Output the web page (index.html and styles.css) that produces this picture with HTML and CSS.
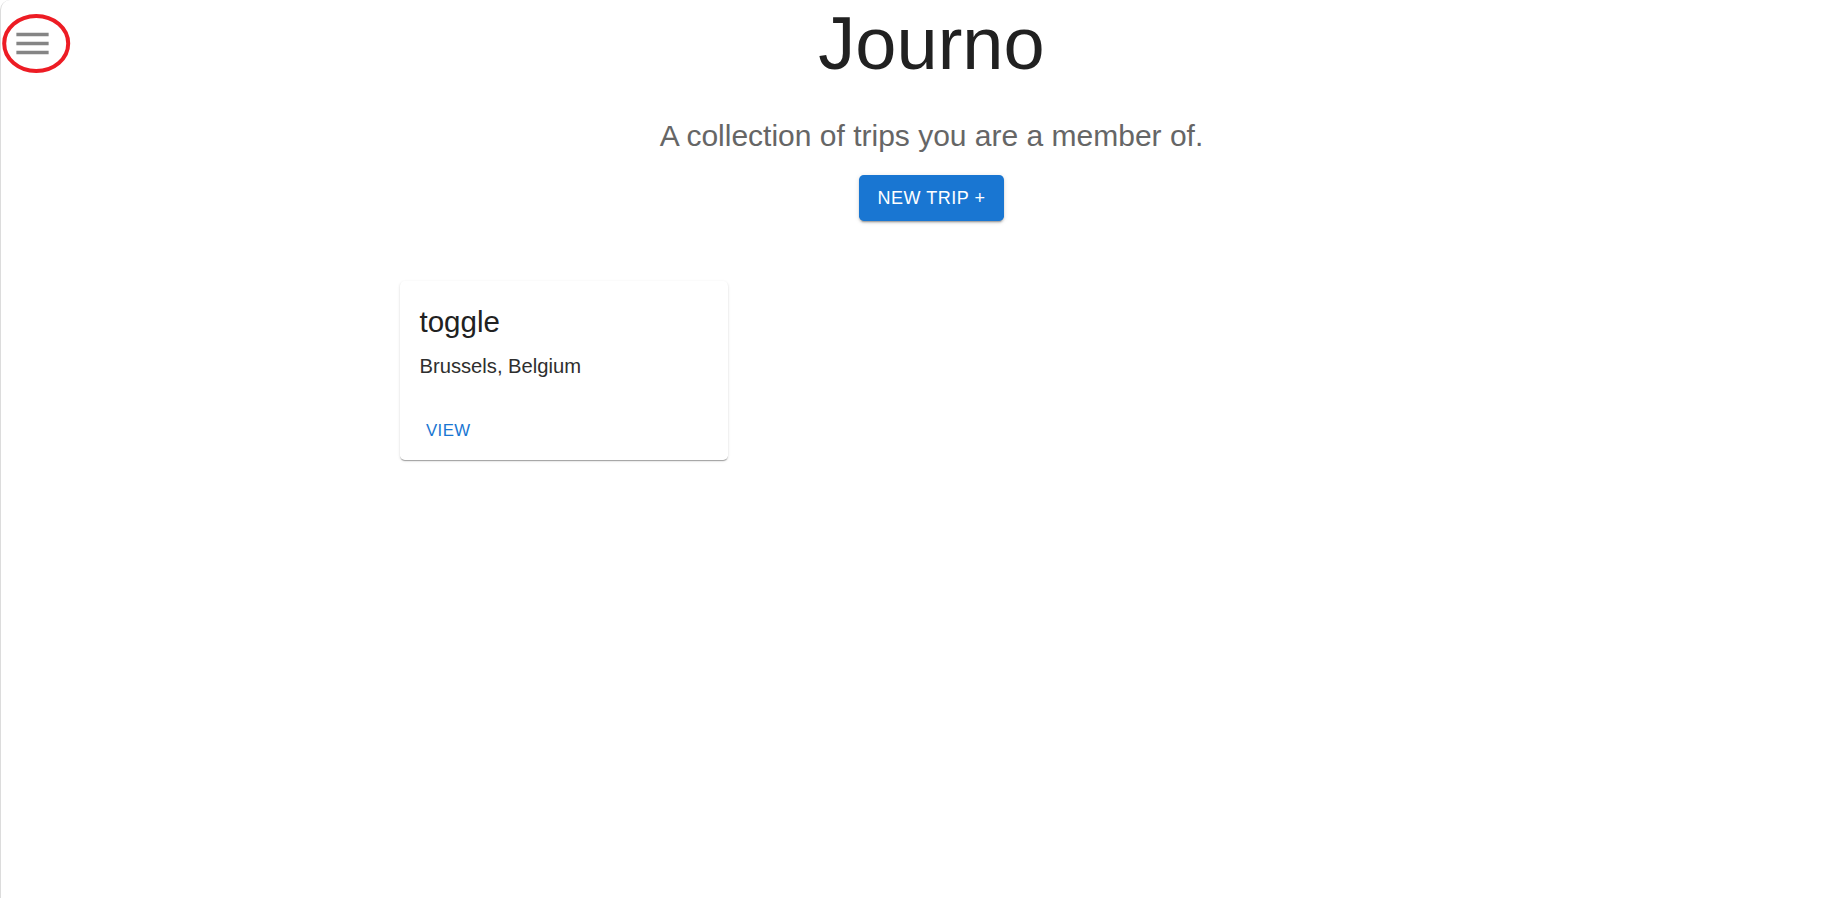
FILE: index.html
```html
<!DOCTYPE html>
<html lang="en">
<head>
<meta charset="utf-8">
<title>Journo</title>
<link rel="stylesheet" href="styles.css">
</head>
<body>
<div class="page">
  <button class="menu-button" aria-label="open menu">
    <svg class="menu-icon" viewBox="0 0 24 24" width="43" height="43"><path d="M3 18h18v-2H3v2zm0-5h18v-2H3v2zm0-7v2h18V6H3z" fill="#858585"/></svg>
    <svg class="annotation" viewBox="0 0 80 80" width="80" height="80"><ellipse cx="36.2" cy="43.5" rx="32" ry="27.5" fill="none" stroke="#ed1c24" stroke-width="4"/></svg>
  </button>
  <header class="hero">
    <h1 class="hero-title">Journo</h1>
    <p class="hero-subtitle">A collection of trips you are a member of.</p>
    <button class="btn-contained">NEW TRIP +</button>
  </header>
  <main class="container">
    <div class="trip-grid">
      <div class="card">
        <div class="card-content">
          <h2 class="card-title">toggle</h2>
          <p class="card-text">Brussels, Belgium</p>
        </div>
        <div class="card-actions">
          <button class="btn-text">VIEW</button>
        </div>
      </div>
    </div>
  </main>
</div>
</body>
</html>
```
FILE: styles.css
```css
* { box-sizing: border-box; }
html, body { margin: 0; padding: 0; background: #fff; }
body {
  font-family: "Liberation Sans", Arial, Helvetica, sans-serif;
  color: rgba(0,0,0,0.87);
}
.page {
  position: relative;
  min-height: 100vh;
  border-left: 1px solid #dcdcdc;
  border-top-left-radius: 10px;
}
.menu-button {
  position: absolute;
  left: -1px;
  top: 0;
  width: 80px;
  height: 80px;
  padding: 0;
  border: 0;
  background: transparent;
  cursor: pointer;
}
.menu-icon {
  position: absolute;
  left: 11px;
  top: 22px;
  display: block;
}
.annotation {
  position: absolute;
  left: 0;
  top: 0;
  display: block;
}
.hero {
  padding-left: 40px;
  display: flex;
  flex-direction: column;
  align-items: center;
}
.hero-title {
  margin: 0;
  font-size: 74px;
  line-height: 1.2;
  font-weight: 400;
  color: #212121;
}
.hero-subtitle {
  margin: 26.8px 0 0;
  font-size: 30px;
  line-height: 40px;
  color: #666;
}
.btn-contained {
  margin-top: 19.4px;
  height: 46px;
  padding: 7px 19px;
  font-family: inherit;
  font-size: 18px;
  line-height: 32px;
  letter-spacing: 0.5px;
  font-weight: 400;
  color: #fff;
  background: #1976d2;
  border: 0;
  border-radius: 4.8px;
  box-shadow: 0 3px 1px -2px rgba(0,0,0,.2), 0 2px 2px 0 rgba(0,0,0,.14), 0 1px 5px 0 rgba(0,0,0,.12);
  cursor: pointer;
}
.container {
  max-width: 1080px;
  margin: 60px auto 0;
  padding: 0 28.8px;
}
.trip-grid {
  display: grid;
  grid-template-columns: repeat(3, 1fr);
  gap: 19.2px;
}
.card {
  background: #fff;
  border-radius: 4.8px;
  box-shadow: 0 2px 1px -1px rgba(0,0,0,.2), 0 1px 1px 0 rgba(0,0,0,.14), 0 1px 3px 0 rgba(0,0,0,.12);
}
.card-content {
  padding: 22px 19.2px 21px;
}
.card-title {
  margin: 0 0 10.5px;
  font-size: 29.5px;
  line-height: 38.4px;
  font-weight: 400;
  color: #212121;
}
.card-text {
  margin: 0;
  font-size: 20.2px;
  line-height: 28.8px;
  color: #2e2e2e;
}
.card-actions {
  display: flex;
  align-items: center;
  padding: 9.6px;
}
.btn-text {
  min-width: 76.8px;
  padding: 4.8px 6px;
  font-family: inherit;
  font-size: 16.8px;
  line-height: 29.4px;
  letter-spacing: 0.48px;
  color: #1976d2;
  background: transparent;
  border: 0;
  border-radius: 4.8px;
  cursor: pointer;
}
```
